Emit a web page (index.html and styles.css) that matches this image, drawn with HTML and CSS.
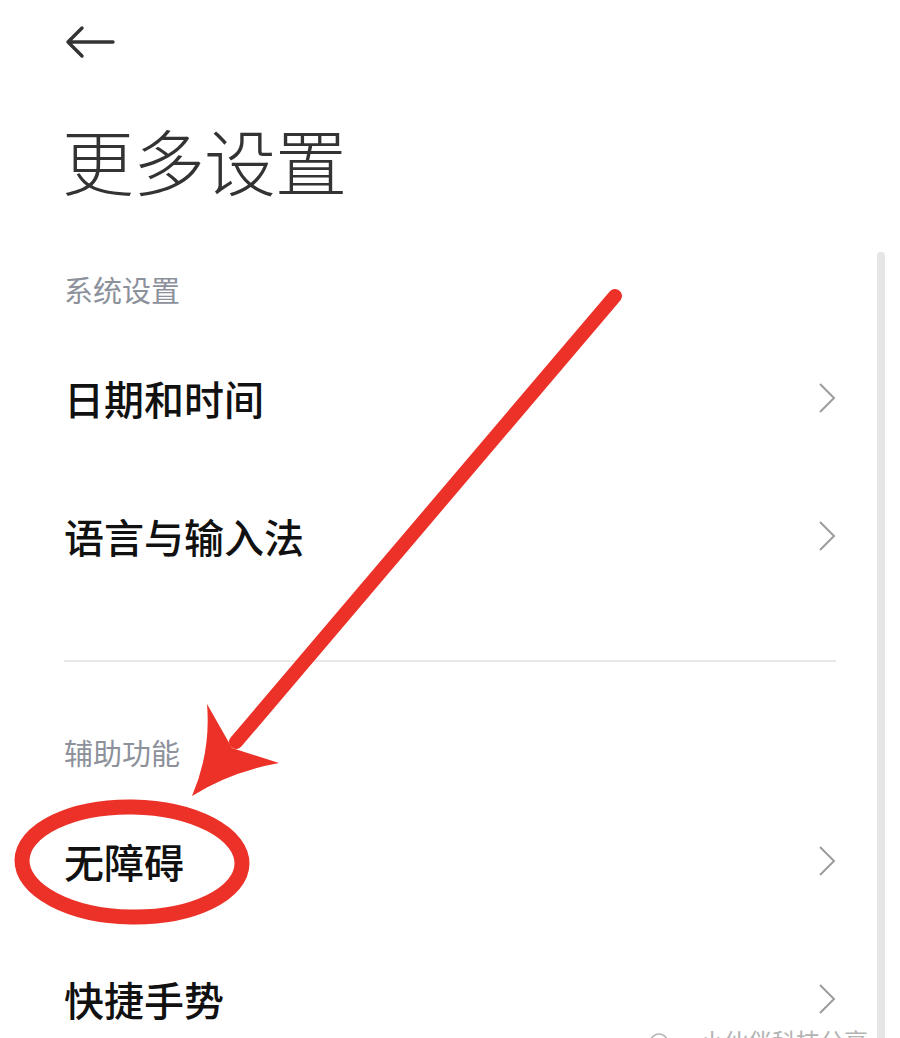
FILE: index.html
```html
<!DOCTYPE html>
<html lang="zh-CN">
<head>
  <meta charset="UTF-8" />
  <meta name="viewport" content="width=device-width, initial-scale=1.0"/>
  <title>更多设置</title>
  <link rel="stylesheet" href="styles.css">
</head>
<body>
  <div class="page">
    <header class="topbar">
      <svg class="back" width="50" height="34" viewBox="0 0 50 34">
        <path d="M48 17 H3 M17 3 L3 17 L17 31" fill="none" stroke="#333" stroke-width="3.4" stroke-linecap="round" stroke-linejoin="round"/>
      </svg>
    </header>

    <h1 class="title">更多设置</h1>

    <section class="group">
      <div class="group-title">系统设置</div>
      <div class="row">
        <span>日期和时间</span>
        <svg class="chev" width="18" height="32" viewBox="0 0 18 32"><path d="M2 2 L16 16 L2 30" fill="none" stroke="#9c9c9c" stroke-width="2"/></svg>
      </div>
      <div class="row">
        <span>语言与输入法</span>
        <svg class="chev" width="18" height="32" viewBox="0 0 18 32"><path d="M2 2 L16 16 L2 30" fill="none" stroke="#9c9c9c" stroke-width="2"/></svg>
      </div>
    </section>

    <hr class="divider">

    <section class="group second">
      <div class="group-title">辅助功能</div>
      <div class="row">
        <span>无障碍</span>
        <svg class="chev" width="18" height="32" viewBox="0 0 18 32"><path d="M2 2 L16 16 L2 30" fill="none" stroke="#9c9c9c" stroke-width="2"/></svg>
      </div>
      <div class="row">
        <span>快捷手势</span>
        <svg class="chev" width="18" height="32" viewBox="0 0 18 32"><path d="M2 2 L16 16 L2 30" fill="none" stroke="#9c9c9c" stroke-width="2"/></svg>
      </div>
    </section>
  </div>

  <div class="scrollbar"></div>

  <!-- red annotation drawn over the screenshot -->
  <svg class="markup" width="900" height="1038" viewBox="0 0 900 1038">
    <line x1="615" y1="296" x2="236" y2="742" stroke="#ec3128" stroke-width="14" stroke-linecap="round"/>
    <path d="M192 796 Q211 752 207 704 L232 748 L279 763 Q230 772 192 796 Z" fill="#ec3128"/>
    <ellipse cx="132" cy="862" rx="110" ry="55" fill="none" stroke="#ec3128" stroke-width="15" transform="rotate(1 132 862)"/>
  </svg>

  <div class="watermark">
    <svg width="22" height="20" viewBox="0 0 22 20"><ellipse cx="9" cy="9" rx="8" ry="7" fill="none" stroke="#b5b5b5" stroke-width="1.6"/><ellipse cx="15" cy="13" rx="6" ry="5" fill="#fff" stroke="#b5b5b5" stroke-width="1.6"/></svg>
    <span>小伙伴科技分享</span>
  </div>
</body>
</html>
```

FILE: styles.css
```css
html, body {
  margin: 0;
  padding: 0;
  background-color: #fff;
}
body {
  height: 1038px;
  overflow: hidden;
  position: relative;
  font-family: "Noto Sans CJK SC", "Noto Sans", sans-serif;
}
.page {
  padding: 0 64px;
}
.topbar {
  height: 84px;
  display: flex;
  align-items: center;
}
.back {
  margin-left: 1px;
  display: block;
}
.title {
  margin: 25px 0 0 -2px;
  height: 100px;
  line-height: 100px;
  font-size: 72px;
  font-weight: 300;
  color: #333;
  letter-spacing: -1px;
}
.group {
  margin-top: 60px;
}
.group.second {
  margin-top: 70px;
}
.group-title {
  height: 40px;
  line-height: 40px;
  font-size: 29px;
  color: #8c919b;
  margin-bottom: 20px;
}
.row {
  height: 138px;
  display: flex;
  align-items: center;
  justify-content: space-between;
  font-size: 40px;
  font-weight: 500;
  color: #111;
}
.chev {
  display: block;
  margin-right: 0;
}
.divider {
  margin: 55px 0 0 0;
  border: none;
  height: 2px;
  background-color: #e8e8e8;
}
.scrollbar {
  position: absolute;
  left: 877px;
  top: 252px;
  bottom: 0;
  width: 8px;
  border-radius: 4px 4px 0 0;
  background-color: #e6e6e6;
}
.markup {
  position: absolute;
  left: 0;
  top: 0;
  pointer-events: none;
}
.watermark {
  position: absolute;
  left: 650px;
  top: 1029px;
  display: flex;
  align-items: flex-start;
  gap: 28px;
  color: #b3b3b3;
  font-size: 24px;
  line-height: 24px;
}
.watermark svg {
  margin-top: 3px;
}
```
